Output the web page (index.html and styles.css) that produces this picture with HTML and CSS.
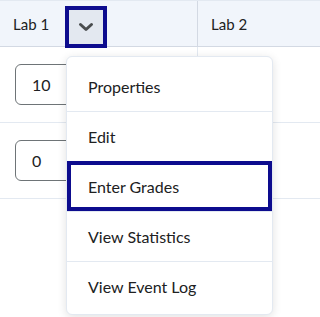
FILE: index.html
```html
<!DOCTYPE html>
<html>
<head>
<meta charset="utf-8">
<link rel="stylesheet" href="styles.css">
</head>
<body>
<div class="page">
  <div class="grid">
    <div class="hcell first">
      <span class="hlabel">Lab 1</span>
      <span class="hbtn">
        <svg width="16" height="10" viewBox="0 0 16 10"><path d="M2.5 2.5 L8 7.5 L13.5 2.5" fill="none" stroke="#494c4e" stroke-width="3" stroke-linecap="round" stroke-linejoin="round"/></svg>
      </span>
    </div>
    <div class="hcell"><span class="hlabel">Lab 2</span></div>
    <div class="cell first"><div class="input">10</div></div>
    <div class="cell"></div>
    <div class="cell first"><div class="input">0</div></div>
    <div class="cell"></div>
  </div>
  <div class="menu">
    <div class="item">Properties</div>
    <div class="item">Edit</div>
    <div class="item focus">Enter Grades</div>
    <div class="item">View Statistics</div>
    <div class="item">View Event Log</div>
  </div>
</div>
</body>
</html>
```
FILE: styles.css
```css
html, body {
  margin: 0;
  padding: 0;
  background: #ffffff;
}
body {
  font-family: Lato, "Noto Sans", sans-serif;
  color: #202122;
}
.page {
  position: relative;
  min-width: 274px;
  height: 317px;
  overflow: hidden;
}
.grid {
  display: grid;
  grid-template-columns: 198px 1fr;
  border-top: 1px solid #e3e9f1;
}
.hcell {
  height: 45px;
  background: #f1f5fb;
  border-bottom: 1px solid #d3d9e3;
  display: flex;
  align-items: center;
  padding-left: 13px;
  font-size: 15px;
  color: #202122;
}
.hcell.first {
  border-right: 1px solid #d3d9e3;
}
.hbtn {
  margin-left: 16px;
  width: 34px;
  height: 34px;
  border: 4px solid #0d0c8e;
  background: #e3e8f0;
  display: flex;
  align-items: center;
  justify-content: center;
  margin-top: 6px;
}
.cell {
  height: 75px;
  border-bottom: 1px solid #e3e9f1;
  display: flex;
  align-items: center;
  padding-left: 15px;
}
.cell.first {
  border-right: 1px solid #e3e9f1;
}
.input {
  width: 70px;
  height: 39px;
  border: 1px solid #6e7477;
  border-radius: 6px;
  box-sizing: content-box;
  display: flex;
  align-items: center;
  padding-left: 16px;
  font-size: 16px;
  color: #202122;
}
.menu {
  position: absolute;
  left: 66px;
  top: 56px;
  width: 205px;
  background: #ffffff;
  border: 1px solid #e3e9f1;
  border-radius: 6px;
  box-shadow: 0 2px 10px rgba(0, 0, 0, 0.12);
  padding: 4px 0 3px;
}
.item {
  height: 49px;
  display: flex;
  align-items: center;
  padding-left: 21px;
  font-size: 16px;
  color: #202122;
  border-top: 1px solid #e3e9f1;
}
.item:first-child {
  border-top: none;
  height: 50px;
}
.item.focus {
  border-top: none;
  height: 50px;
  box-shadow: inset 0 0 0 4px #0d0c8e;
}
```
